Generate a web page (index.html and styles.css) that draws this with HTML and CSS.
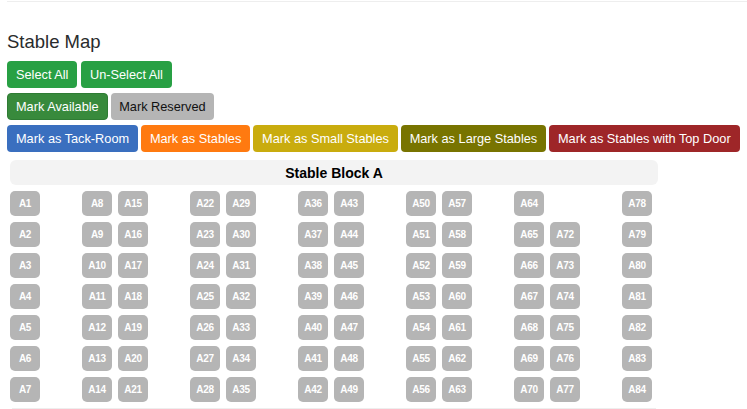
FILE: index.html
```html
<!DOCTYPE html>
<html lang="en">
<head>
  <meta charset="UTF-8" />
  <title>Stable Map</title>
  <link rel="stylesheet" href="styles.css">
</head>
<body>
  <hr class="rule rule-top" />

  <h2 class="title">Stable Map</h2>

  <div class="btn-row">
    <button class="btn btn-green">Select All</button>
    <button class="btn btn-green">Un-Select All</button>
  </div>
  <div class="btn-row">
    <button class="btn btn-available">Mark Available</button>
    <button class="btn btn-reserved">Mark Reserved</button>
  </div>
  <div class="btn-row btn-row-tight">
    <button class="btn btn-tack">Mark as Tack-Room</button>
    <button class="btn btn-stables">Mark as Stables</button>
    <button class="btn btn-small">Mark as Small Stables</button>
    <button class="btn btn-large">Mark as Large Stables</button>
    <button class="btn btn-top">Mark as Stables with Top Door</button>
  </div>

  <div class="block">
    <div class="block-title">Stable Block A</div>
    <div class="stalls">
      <div class="col">
        <span class="stall">A1</span><span class="stall">A2</span><span class="stall">A3</span><span class="stall">A4</span><span class="stall">A5</span><span class="stall">A6</span><span class="stall">A7</span>
      </div>
      <div class="col skip">
        <span class="stall">A8</span><span class="stall">A9</span><span class="stall">A10</span><span class="stall">A11</span><span class="stall">A12</span><span class="stall">A13</span><span class="stall">A14</span>
      </div>
      <div class="col">
        <span class="stall">A15</span><span class="stall">A16</span><span class="stall">A17</span><span class="stall">A18</span><span class="stall">A19</span><span class="stall">A20</span><span class="stall">A21</span>
      </div>
      <div class="col skip">
        <span class="stall">A22</span><span class="stall">A23</span><span class="stall">A24</span><span class="stall">A25</span><span class="stall">A26</span><span class="stall">A27</span><span class="stall">A28</span>
      </div>
      <div class="col">
        <span class="stall">A29</span><span class="stall">A30</span><span class="stall">A31</span><span class="stall">A32</span><span class="stall">A33</span><span class="stall">A34</span><span class="stall">A35</span>
      </div>
      <div class="col skip">
        <span class="stall">A36</span><span class="stall">A37</span><span class="stall">A38</span><span class="stall">A39</span><span class="stall">A40</span><span class="stall">A41</span><span class="stall">A42</span>
      </div>
      <div class="col">
        <span class="stall">A43</span><span class="stall">A44</span><span class="stall">A45</span><span class="stall">A46</span><span class="stall">A47</span><span class="stall">A48</span><span class="stall">A49</span>
      </div>
      <div class="col skip">
        <span class="stall">A50</span><span class="stall">A51</span><span class="stall">A52</span><span class="stall">A53</span><span class="stall">A54</span><span class="stall">A55</span><span class="stall">A56</span>
      </div>
      <div class="col">
        <span class="stall">A57</span><span class="stall">A58</span><span class="stall">A59</span><span class="stall">A60</span><span class="stall">A61</span><span class="stall">A62</span><span class="stall">A63</span>
      </div>
      <div class="col skip">
        <span class="stall">A64</span><span class="stall">A65</span><span class="stall">A66</span><span class="stall">A67</span><span class="stall">A68</span><span class="stall">A69</span><span class="stall">A70</span>
      </div>
      <div class="col">
        <span class="stall stall-blank"></span><span class="stall">A72</span><span class="stall">A73</span><span class="stall">A74</span><span class="stall">A75</span><span class="stall">A76</span><span class="stall">A77</span>
      </div>
      <div class="col skip">
        <span class="stall">A78</span><span class="stall">A79</span><span class="stall">A80</span><span class="stall">A81</span><span class="stall">A82</span><span class="stall">A83</span><span class="stall">A84</span>
      </div>
    </div>
  </div>

  <hr class="rule rule-bottom" />
</body>
</html>
```

FILE: styles.css
```css
* {
  box-sizing: border-box;
}

html, body {
  height: 409px;
  overflow: hidden;
}

body {
  margin: 0;
  padding: 1px 7px 0;
  background: #fff;
  font-family: "Liberation Sans", Arial, sans-serif;
  color: #292b2c;
}

.rule {
  height: 1px;
  margin: 0;
  border: none;
  background: #eee;
}

.rule-top {
  margin-right: -7px;
}

.rule-bottom {
  margin: 6px 0 0 5px;
  width: 644px;
}

.title {
  margin: 30px 0 0;
  height: 29px;
  font-size: 18.5px;
  font-weight: 500;
  line-height: 20px;
}

.btn-row {
  display: flex;
  gap: 3.5px;
  margin-bottom: 5px;
}

.btn-row-tight {
  gap: 2.75px;
}

.btn {
  flex: none;
  height: 27px;
  padding: 0 8px;
  border: 1px solid transparent;
  border-radius: 4px;
  font-family: inherit;
  font-size: 12.75px;
  white-space: nowrap;
  color: #fff;
}

.btn-green { background: #28a044; }
.btn-available { background: #388a3c; border-color: #2f7c34; }
.btn-reserved { background: #b5b5b5; color: #111; padding: 0 7px; }
.btn-tack { background: #3a6fbf; }
.btn-stables { background: #ff7a10; }
.btn-small { background: #c9ac0e; }
.btn-large { background: #787400; }
.btn-top { background: #9e2628; }

.block {
  margin: 8px 0 0 3px;
  width: 648px;
}

.block-title {
  height: 25px;
  margin-bottom: 6px;
  background: #f3f3f3;
  border-radius: 6px;
  font-size: 14px;
  font-weight: bold;
  line-height: 26px;
  text-align: center;
  color: #000;
}

.stalls {
  display: flex;
  gap: 6px;
}

.col {
  display: flex;
  flex-direction: column;
  gap: 6px;
  width: 30px;
}

.skip {
  margin-left: 36px;
}

.stall {
  height: 25px;
  background: #b5b5b5;
  border-radius: 5px;
  font-size: 10px;
  font-weight: bold;
  letter-spacing: -0.35px;
  line-height: 25px;
  text-align: center;
  color: #fff;
}

.stall-blank {
  background: none;
}
```
